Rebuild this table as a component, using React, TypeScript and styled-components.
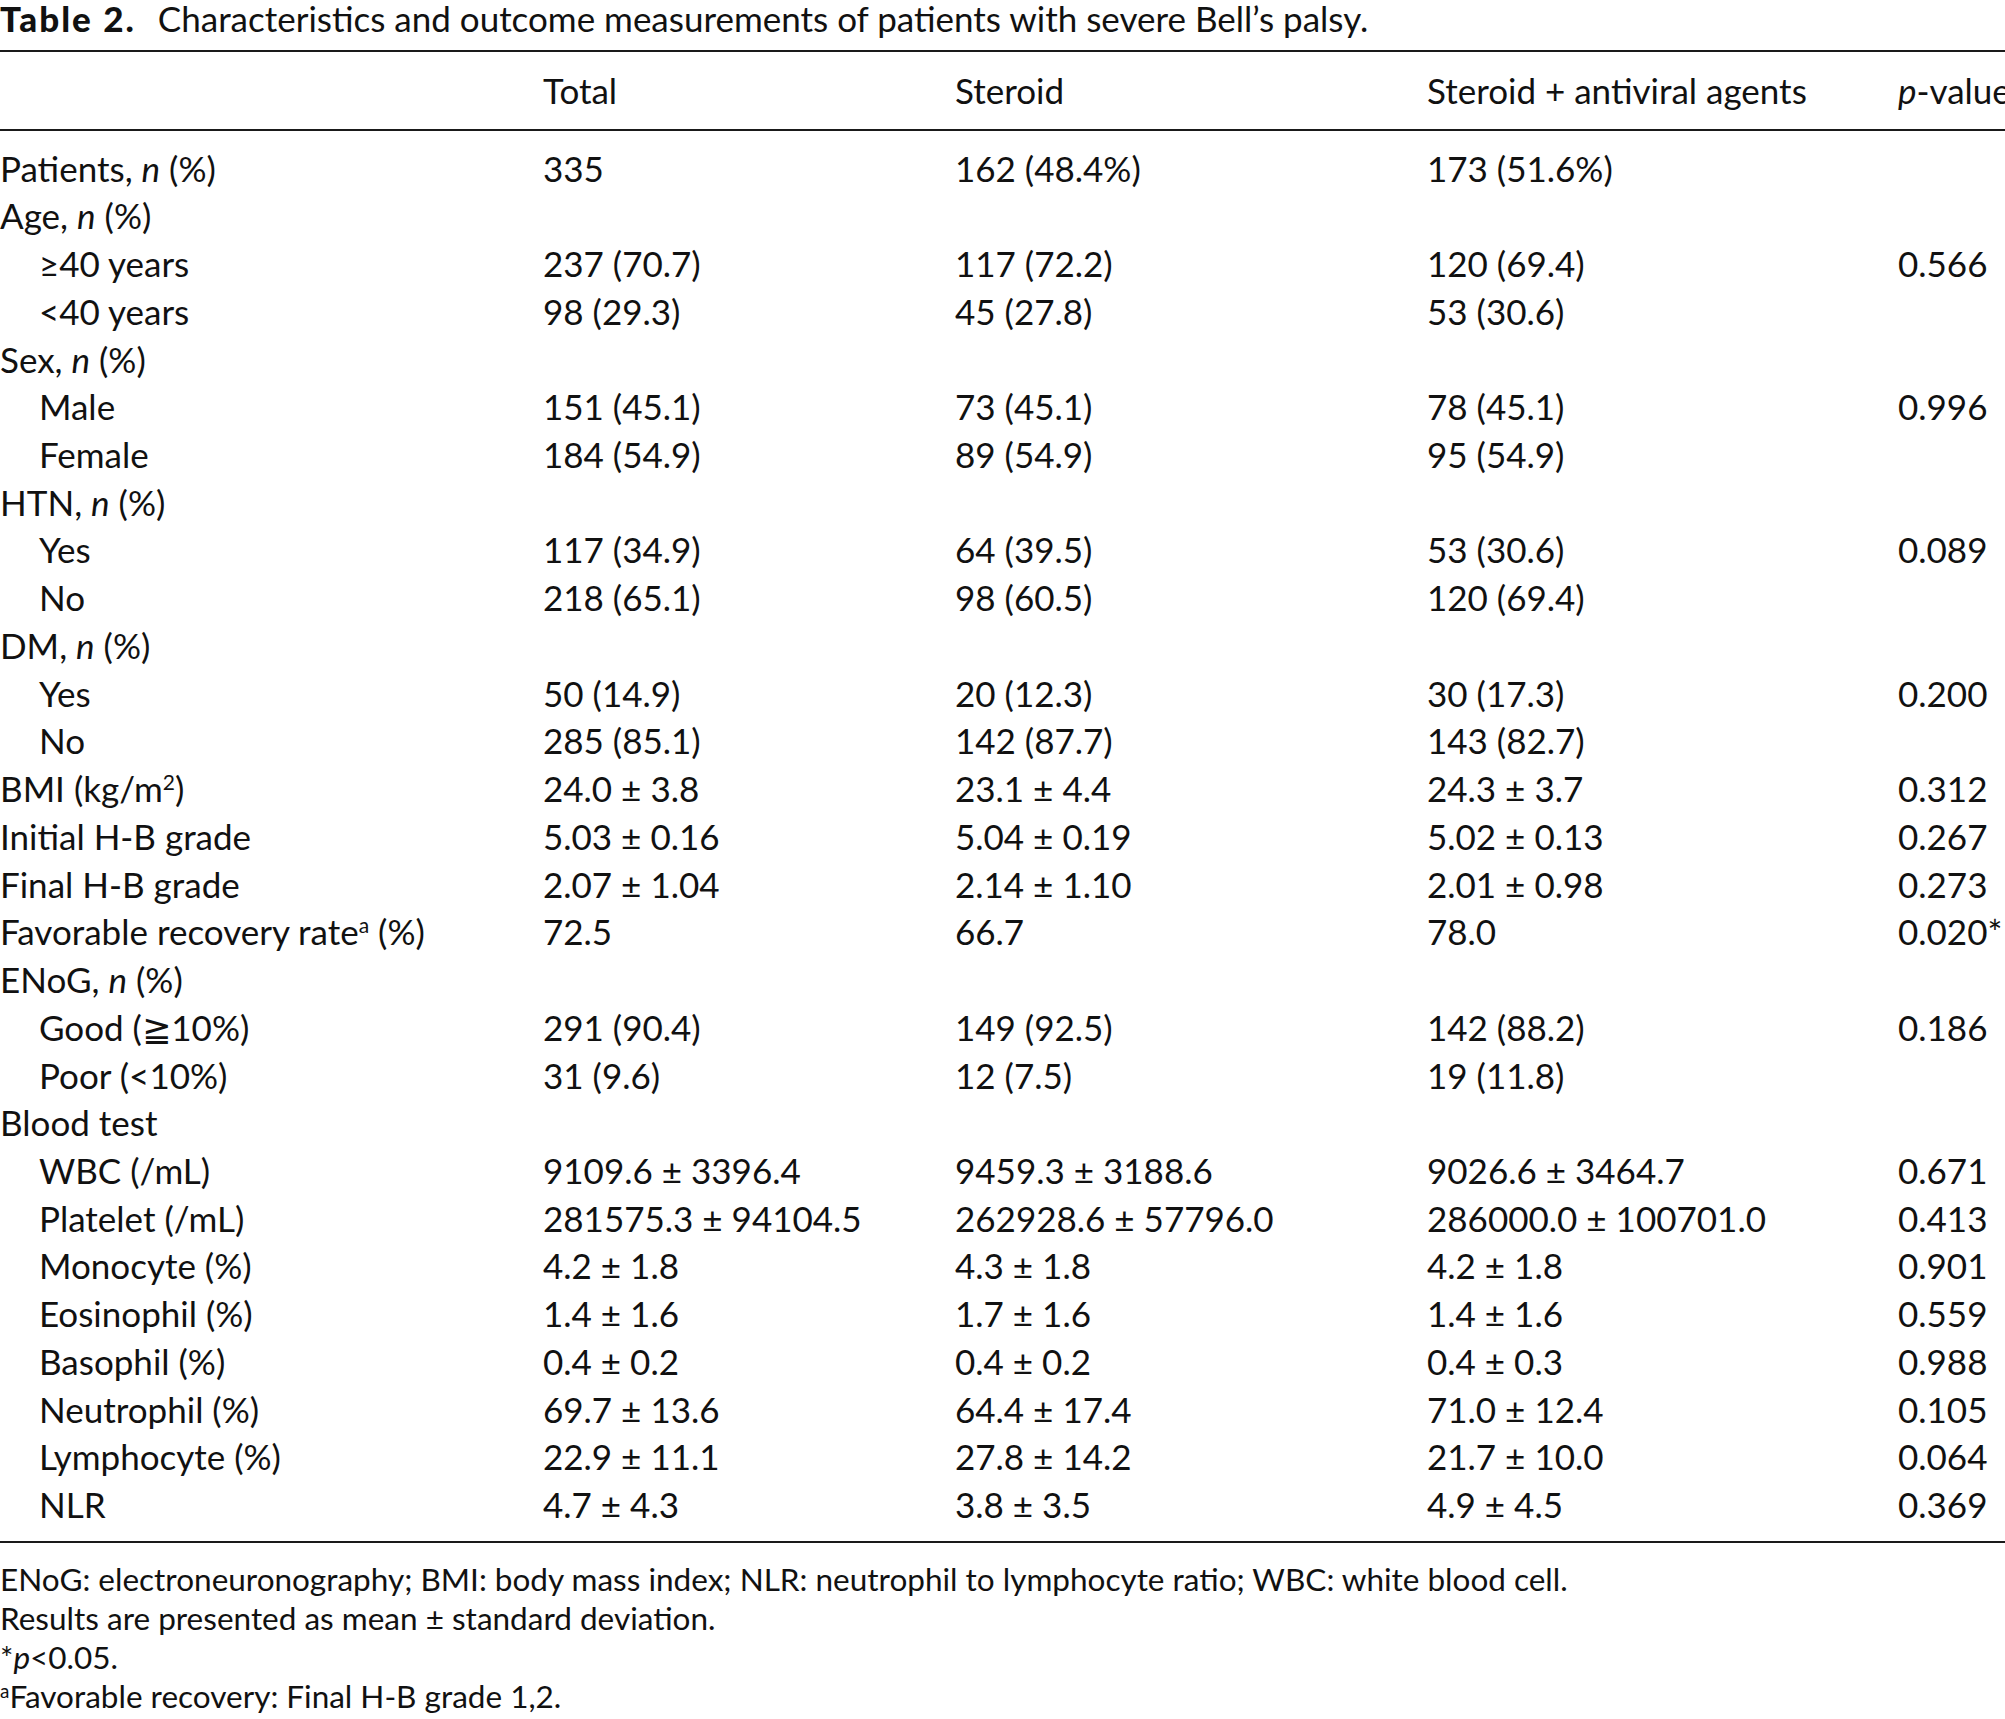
import React, { ReactNode } from 'react';
import styled, { createGlobalStyle } from 'styled-components';

const GlobalStyle = createGlobalStyle`
  html, body {
    margin: 0;
    padding: 0;
    background: #fff;
    overflow: hidden;
  }
  body {
    font-family: Lato, "Open Sans", "DejaVu Sans", sans-serif;
    color: #111;
  }
`;

const Page = styled.main`
  width: 2005px;
`;

const Caption = styled.p`
  margin: 0 0 14px;
  font-size: 35px;
  line-height: 36px;
  white-space: nowrap;
`;

const CaptionLabel = styled.b`
  font-weight: 900;
  letter-spacing: 2px;
  margin-right: 22px;
`;

const Table = styled.table`
  width: 2005px;
  table-layout: fixed;
  border-collapse: separate;
  border-spacing: 0;
  font-size: 35px;
  line-height: 47.73px;

  tbody tr:first-child td {
    padding-top: 13.6px;
  }
  tbody tr:last-child td {
    padding-bottom: 12px;
    border-bottom: 2px solid #1a1a1a;
  }
`;

const HeadCell = styled.th`
  height: 77px;
  padding: 0;
  text-align: left;
  font-weight: 400;
  white-space: nowrap;
  vertical-align: middle;
  border-top: 2px solid #1a1a1a;
  border-bottom: 2px solid #1a1a1a;
`;

const Cell = styled.td<{ $indent?: boolean }>`
  padding: 0 0 0 ${(p) => (p.$indent ? '39px' : '0')};
  white-space: nowrap;
  vertical-align: middle;
`;

const Sup = styled.sup`
  font-size: 0.6em;
  line-height: 0;
  vertical-align: 0.55em;
`;

const Notes = styled.div`
  margin-top: 17px;
  font-size: 31.5px;
  line-height: 39px;
`;

const NoteLine = styled.p`
  margin: 0;
  white-space: nowrap;
`;

type Row = {
  label: ReactNode;
  sub?: boolean;
  cells?: [string, string, string];
  p?: string;
};

const nPct = (name: string) => (
  <>
    {name}, <i>n</i> (%)
  </>
);

const rows: Row[] = [
  { label: nPct('Patients'), cells: ['335', '162 (48.4%)', '173 (51.6%)'] },
  { label: nPct('Age') },
  { label: '≥40 years', sub: true, cells: ['237 (70.7)', '117 (72.2)', '120 (69.4)'], p: '0.566' },
  { label: '<40 years', sub: true, cells: ['98 (29.3)', '45 (27.8)', '53 (30.6)'] },
  { label: nPct('Sex') },
  { label: 'Male', sub: true, cells: ['151 (45.1)', '73 (45.1)', '78 (45.1)'], p: '0.996' },
  { label: 'Female', sub: true, cells: ['184 (54.9)', '89 (54.9)', '95 (54.9)'] },
  { label: nPct('HTN') },
  { label: 'Yes', sub: true, cells: ['117 (34.9)', '64 (39.5)', '53 (30.6)'], p: '0.089' },
  { label: 'No', sub: true, cells: ['218 (65.1)', '98 (60.5)', '120 (69.4)'] },
  { label: nPct('DM') },
  { label: 'Yes', sub: true, cells: ['50 (14.9)', '20 (12.3)', '30 (17.3)'], p: '0.200' },
  { label: 'No', sub: true, cells: ['285 (85.1)', '142 (87.7)', '143 (82.7)'] },
  {
    label: (
      <>
        BMI (kg/m<Sup>2</Sup>)
      </>
    ),
    cells: ['24.0 ± 3.8', '23.1 ± 4.4', '24.3 ± 3.7'],
    p: '0.312',
  },
  { label: 'Initial H-B grade', cells: ['5.03 ± 0.16', '5.04 ± 0.19', '5.02 ± 0.13'], p: '0.267' },
  { label: 'Final H-B grade', cells: ['2.07 ± 1.04', '2.14 ± 1.10', '2.01 ± 0.98'], p: '0.273' },
  {
    label: (
      <>
        Favorable recovery rate<Sup>a</Sup> (%)
      </>
    ),
    cells: ['72.5', '66.7', '78.0'],
    p: '0.020*',
  },
  { label: nPct('ENoG') },
  { label: 'Good (≧10%)', sub: true, cells: ['291 (90.4)', '149 (92.5)', '142 (88.2)'], p: '0.186' },
  { label: 'Poor (<10%)', sub: true, cells: ['31 (9.6)', '12 (7.5)', '19 (11.8)'] },
  { label: 'Blood test' },
  { label: 'WBC (/mL)', sub: true, cells: ['9109.6 ± 3396.4', '9459.3 ± 3188.6', '9026.6 ± 3464.7'], p: '0.671' },
  {
    label: 'Platelet (/mL)',
    sub: true,
    cells: ['281575.3 ± 94104.5', '262928.6 ± 57796.0', '286000.0 ± 100701.0'],
    p: '0.413',
  },
  { label: 'Monocyte (%)', sub: true, cells: ['4.2 ± 1.8', '4.3 ± 1.8', '4.2 ± 1.8'], p: '0.901' },
  { label: 'Eosinophil (%)', sub: true, cells: ['1.4 ± 1.6', '1.7 ± 1.6', '1.4 ± 1.6'], p: '0.559' },
  { label: 'Basophil (%)', sub: true, cells: ['0.4 ± 0.2', '0.4 ± 0.2', '0.4 ± 0.3'], p: '0.988' },
  { label: 'Neutrophil (%)', sub: true, cells: ['69.7 ± 13.6', '64.4 ± 17.4', '71.0 ± 12.4'], p: '0.105' },
  { label: 'Lymphocyte (%)', sub: true, cells: ['22.9 ± 11.1', '27.8 ± 14.2', '21.7 ± 10.0'], p: '0.064' },
  { label: 'NLR', sub: true, cells: ['4.7 ± 4.3', '3.8 ± 3.5', '4.9 ± 4.5'], p: '0.369' },
];

const App = () => {
  return (
    <Page>
      <GlobalStyle />
      <Caption>
        <CaptionLabel>Table 2.</CaptionLabel>
        Characteristics and outcome measurements of patients with severe Bell’s palsy.
      </Caption>
      <Table>
        <colgroup>
          <col style={{ width: 543 }} />
          <col style={{ width: 412 }} />
          <col style={{ width: 472 }} />
          <col style={{ width: 471 }} />
          <col style={{ width: 107 }} />
        </colgroup>
        <thead>
          <tr>
            <HeadCell />
            <HeadCell>Total</HeadCell>
            <HeadCell>Steroid</HeadCell>
            <HeadCell>Steroid + antiviral agents</HeadCell>
            <HeadCell>
              <i>p</i>-value
            </HeadCell>
          </tr>
        </thead>
        <tbody>
          {rows.map((row, i) => (
            <tr key={i}>
              <Cell $indent={row.sub}>{row.label}</Cell>
              <Cell>{row.cells?.[0]}</Cell>
              <Cell>{row.cells?.[1]}</Cell>
              <Cell>{row.cells?.[2]}</Cell>
              <Cell>{row.p}</Cell>
            </tr>
          ))}
        </tbody>
      </Table>
      <Notes>
        <NoteLine>ENoG: electroneuronography; BMI: body mass index; NLR: neutrophil to lymphocyte ratio; WBC: white blood cell.</NoteLine>
        <NoteLine>Results are presented as mean ± standard deviation.</NoteLine>
        <NoteLine>
          *<i>p</i>&lt;0.05.
        </NoteLine>
        <NoteLine>
          <Sup>a</Sup>Favorable recovery: Final H-B grade 1,2.
        </NoteLine>
      </Notes>
    </Page>
  );
};

export default App;
